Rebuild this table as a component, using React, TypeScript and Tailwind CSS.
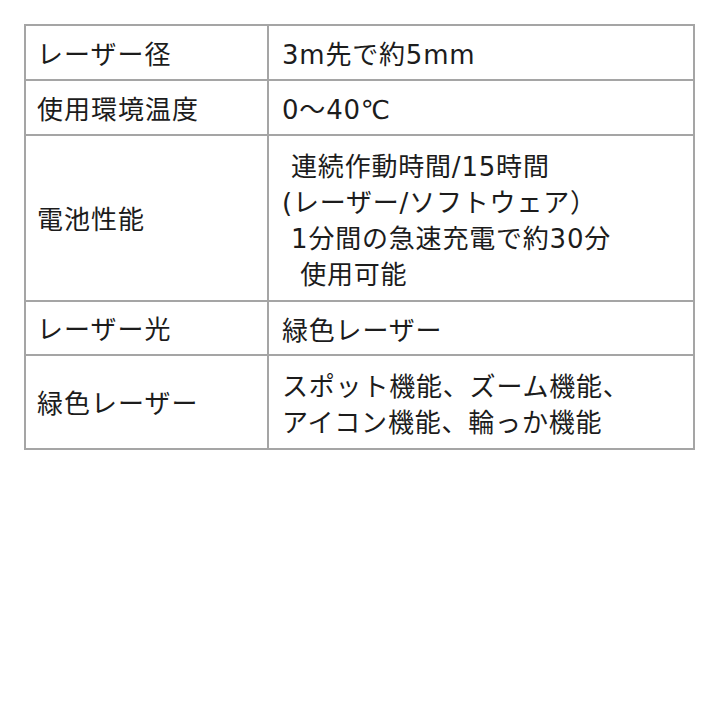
const rows: { label: string; lines: string[]; h: string }[] = [
  { label: "レーザー径", lines: ["3m先で約5mm"], h: "h-[55px]" },
  { label: "使用環境温度", lines: ["0〜40℃"], h: "h-[55px]" },
  {
    label: "電池性能",
    lines: [" 連続作動時間/15時間", "(レーザー/ソフトウェア）", " 1分間の急速充電で約30分", "  使用可能"],
    h: "h-[166px]",
  },
  { label: "レーザー光", lines: ["緑色レーザー"], h: "h-[54px]" },
  { label: "緑色レーザー", lines: ["スポット機能、ズーム機能、", "アイコン機能、輪っか機能"], h: "h-[94px]" },
];

export default function App() {
  return (
    <div
      className="w-[720px] h-[720px] bg-white pt-[24px] pl-[24px] text-[#1c1c1c]"
      style={{ fontFamily: '"DejaVu Sans", "Noto Sans CJK JP", sans-serif' }}
    >
      <div className="w-[671px] grid grid-cols-[243px_1fr] border-l-2 border-t-2 border-[#a5a5a5]">
        {rows.map((r) => (
          <div key={r.label} className="contents">
            <div
              className={`${r.h} flex items-center pl-[11px] pt-[5px] border-r-2 border-b-2 border-[#a5a5a5] text-[26px] tracking-[1px]`}
            >
              {r.label}
            </div>
            <div
              className={`${r.h} flex flex-col justify-center pl-[13px] pt-[5px] border-r-2 border-b-2 border-[#a5a5a5] text-[26px] tracking-[0.8px] leading-[36px] whitespace-pre`}
            >
              {r.lines.map((l) => (
                <div key={l}>{l}</div>
              ))}
            </div>
          </div>
        ))}
      </div>
    </div>
  );
}
